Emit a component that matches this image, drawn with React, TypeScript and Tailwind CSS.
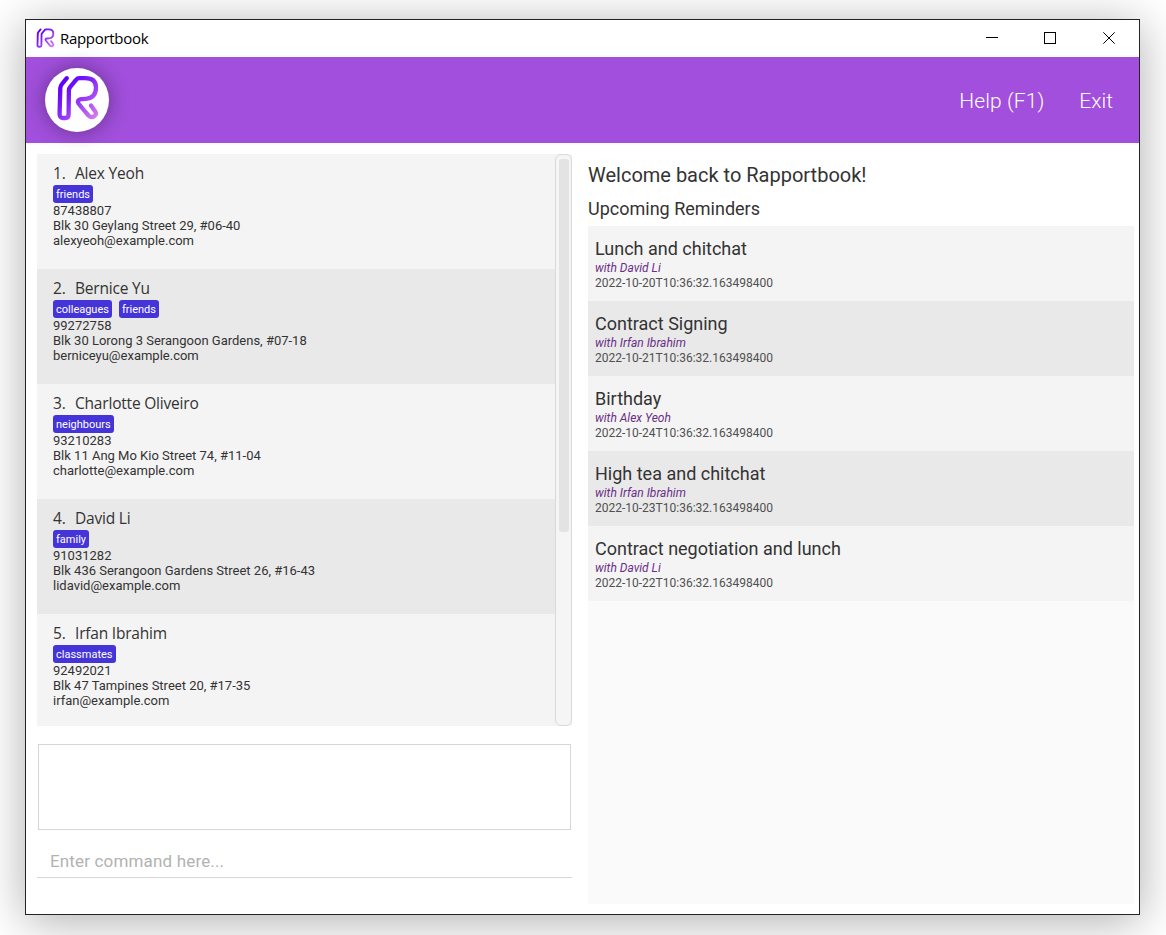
import React from "react";

type Person = {
  name: string;
  tags: string[];
  phone: string;
  address: string;
  email: string;
};

const people: Person[] = [
  { name: "Alex Yeoh", tags: ["friends"], phone: "87438807", address: "Blk 30 Geylang Street 29, #06-40", email: "alexyeoh@example.com" },
  { name: "Bernice Yu", tags: ["colleagues", "friends"], phone: "99272758", address: "Blk 30 Lorong 3 Serangoon Gardens, #07-18", email: "berniceyu@example.com" },
  { name: "Charlotte Oliveiro", tags: ["neighbours"], phone: "93210283", address: "Blk 11 Ang Mo Kio Street 74, #11-04", email: "charlotte@example.com" },
  { name: "David Li", tags: ["family"], phone: "91031282", address: "Blk 436 Serangoon Gardens Street 26, #16-43", email: "lidavid@example.com" },
  { name: "Irfan Ibrahim", tags: ["classmates"], phone: "92492021", address: "Blk 47 Tampines Street 20, #17-35", email: "irfan@example.com" },
];

const reminders = [
  { title: "Lunch and chitchat", who: "David Li", at: "2022-10-20T10:36:32.163498400" },
  { title: "Contract Signing", who: "Irfan Ibrahim", at: "2022-10-21T10:36:32.163498400" },
  { title: "Birthday", who: "Alex Yeoh", at: "2022-10-24T10:36:32.163498400" },
  { title: "High tea and chitchat", who: "Irfan Ibrahim", at: "2022-10-23T10:36:32.163498400" },
  { title: "Contract negotiation and lunch", who: "David Li", at: "2022-10-22T10:36:32.163498400" },
];

function Logo({ id, className }: { id: string; className: string }) {
  return (
    <svg viewBox="0 0 42 46" className={className} fill="none">
      <defs>
        <linearGradient id={id} gradientUnits="userSpaceOnUse" x1="8" y1="8" x2="40" y2="40">
          <stop offset="0" stopColor="#6200ff" />
          <stop offset="0.3" stopColor="#7a1cfa" />
          <stop offset="1" stopColor="#d478ee" />
        </linearGradient>
      </defs>
      <path
        d="M9.8 3.2L5 9Q3.4 11 3.3 13L2.6 38.5Q2.5 43 5.7 43H8.5Q11.6 43 11.6 39.5L11.9 15.5Q11.9 13.5 13.2 12L19 4.8Q20.4 3.2 22.5 3.2H28Q39 3.2 39 12.5Q39 23 29 23.8L24.5 24.2Q19.5 24.8 21.5 28.5Q22.1 29.5 31.5 40.5Q34.3 43.2 37.3 41.2Q40.2 39.2 38.1 36.2L34 30.5"
        stroke={`url(#${id})`}
        strokeWidth="4.3"
        strokeLinecap="round"
        strokeLinejoin="round"
      />
    </svg>
  );
}

export default function App() {
  return (
    <div className="h-[935px] w-[1166px] overflow-hidden bg-white pt-[19px] pl-[25px] font-['Roboto',sans-serif] text-[#333]">
      <div className="flex h-[896px] w-[1115px] flex-col border border-[#242424] bg-white shadow-[0_6px_44px_rgba(0,0,0,0.32)]">
        <div className="flex h-[37px] shrink-0 items-center pr-[23px] pb-px pl-[10px]">
          <Logo id="small-logo" className="h-[20px] w-[19px]" />
          <span className="ml-[5px] font-['Open_Sans',sans-serif] text-[15px] tracking-[-0.3px] text-black">Rapportbook</span>
          <svg className="ml-auto h-[14px] w-[130px]" viewBox="0 0 130 14" fill="none" stroke="#000" strokeWidth="1">
            <path d="M0 6.5H12" />
            <rect x="58.5" y="1.5" width="11" height="11" />
            <path d="M117.3 1.3L128.7 12.7M128.7 1.3L117.3 12.7" />
          </svg>
        </div>

        <div className="flex h-[86px] shrink-0 items-center bg-[#a14fdc] pr-[26px] pl-[19px] text-[21px] font-light text-white">
          <div className="flex size-[64px] items-center justify-center rounded-full bg-white pb-[4px] pl-px shadow-[0_0_20px_rgba(0,0,0,0.38)]">
            <Logo id="large-logo" className="h-[46px] w-[42px]" />
          </div>
          <span className="ml-auto pt-[3px] tracking-[0.1px]">Help (F1)</span>
          <span className="ml-[35px] pt-[3px]">Exit</span>
        </div>

        <div className="flex min-h-0 flex-1 pt-[11px] pr-[5px] pl-[11px]">
          <div className="flex w-[535px] flex-col">
            <div className="flex h-[572px] bg-[#f4f4f4]">
              <div className="flex-1 overflow-hidden">
                {people.map((p, i) => (
                  <div key={p.name} className="h-[115px] pt-[8px] pl-[16px] text-[13px] leading-[15px] odd:bg-[#f4f4f4] even:bg-[#e9e9e9]">
                    <div className="flex h-[21px] items-center pt-px font-['Open_Sans',sans-serif] text-[15.5px] tracking-[-0.2px]">
                      <span className="w-[22px]">{i + 1}.</span>
                      <span>{p.name}</span>
                    </div>
                    <div className="mt-[2px] flex h-[18px] gap-[7px]">
                      {p.tags.map((t) => (
                        <span key={t} className="rounded-[3px] bg-[#4535d8] px-[3px] pt-px text-[11px] leading-[18px] text-white">{t}</span>
                      ))}
                    </div>
                    <div>{p.phone}</div>
                    <div>{p.address}</div>
                    <div>{p.email}</div>
                  </div>
                ))}
              </div>
              <div className="w-[17px] rounded-[6px] border border-[#d9d9d9] bg-[#f5f5f5] pt-[4px] pl-[3px]">
                <div className="h-[373px] w-[10px] rounded-[3px] bg-[#e3e3e3]" />
              </div>
            </div>
            <div className="mt-[18px] ml-px h-[86px] w-[533px] border border-[#d6d6d6]" />
            <div className="mt-[14px] flex h-[34px] items-center border-b border-[#d6d6d6] pt-[2px] pl-[13px] text-[17px] tracking-[0.16px] text-[#b2b2b2]">
              Enter command here...
            </div>
          </div>

          <div className="ml-[16px] flex flex-1 flex-col pb-[10px]">
            <div className="mt-[8px] h-[26px] text-[20px] leading-[26px]">Welcome back to Rapportbook!</div>
            <div className="mt-[8px] h-[30px] text-[18px] leading-[26px]">Upcoming Reminders</div>
            <div className="flex-1 bg-[#fafafa]">
              {reminders.map((r) => (
                <div key={r.title} className="h-[75px] pt-[12px] pl-[7px] text-[12px] leading-[15px] odd:bg-[#f4f4f4] even:bg-[#e9e9e9]">
                  <div className="h-[23px] text-[18px] leading-[22px]">{r.title}</div>
                  <div className="text-[#6a2f86] italic">with {r.who}</div>
                  <div className="text-[#505050]">{r.at}</div>
                </div>
              ))}
            </div>
          </div>
        </div>
      </div>
    </div>
  );
}
